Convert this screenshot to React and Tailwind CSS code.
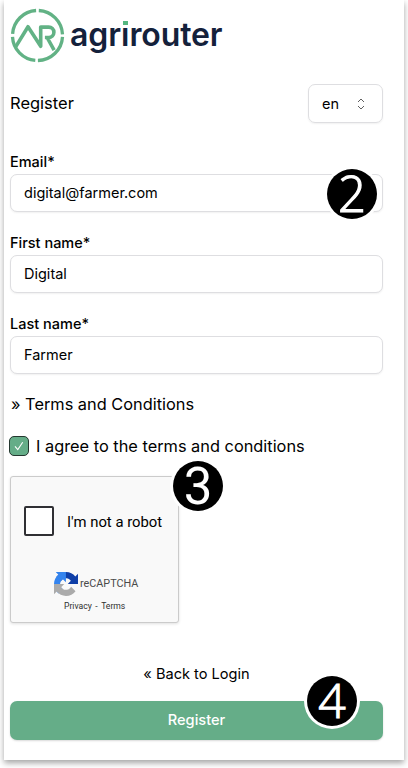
import React from 'react';

function Field({ label, value, children }) {
  return (
    <div className="relative mt-[19px] h-[62px]">
      <label className="block h-[24px] pt-[2px] text-[14.5px] leading-[20px] font-medium">{label}</label>
      <div className="flex h-[38px] items-center rounded-[7px] border border-[#dedee1] bg-white px-[13px] text-[14.5px] shadow-[0_1px_2px_rgba(0,0,0,0.06)]">
        {value}
      </div>
      {children}
    </div>
  );
}

function Badge({ n, place, type }) {
  return (
    <div className={`absolute z-10 flex h-[50px] w-[50px] items-center justify-center rounded-full bg-black leading-none text-white shadow-[0_0_0_3px_#fff] ${place} ${type}`}>
      {n}
    </div>
  );
}

function Logo() {
  return (
    <div className="flex h-[54px] items-center">
      <svg width="55" height="55" viewBox="-0.5 -0.5 55 55" fill="none" stroke="#62b285" strokeWidth="3.3">
        <path d="M28.3 2A25 25 0 0 1 52 25.8M52 28.4A25 25 0 0 1 27.4 52M24.8 51.9A25 25 0 0 1 2 28.3M2.1 25.4A25 25 0 0 1 25.6 2" />
        <path d="M5 38.6L17.5 18.2L30.2 37.8V18.6H38.2A5.2 5.2 0 0 1 38.2 29H34.4M36.6 29L43.6 41.6" strokeWidth="3.6" strokeLinejoin="round" />
      </svg>
      <div className="relative ml-[5px] w-[154px] text-[32px] leading-[40px] font-semibold tracking-[-0.1px] text-[#14213b]">
        agr&#305;router
        <span className="absolute top-[6px] left-[53px] h-[4px] w-[5px] bg-[#54b780]" />
      </div>
    </div>
  );
}

function Captcha() {
  return (
    <div className="relative mt-[20px] h-[147px] w-[169px] rounded-[3px] border border-[#cbcbcb] bg-[#f9f9f9] shadow-[0_1px_3px_rgba(0,0,0,0.12)] font-['Roboto',sans-serif]">
      <div className="flex items-center pt-[29px] pl-[13px]">
        <span className="h-[30px] w-[30px] rounded-[2px] border-2 border-[#303034] bg-white" />
        <span className="ml-[13px] pt-px text-[14.85px] leading-[20px] whitespace-nowrap text-black">I'm not a robot</span>
      </div>
      <div className="mt-[35px] ml-[43px] flex h-[25px] items-center">
        <svg width="24" height="24" viewBox="0 0 64 64">
          <path d="M64 31.955l-.033-1.37V4.687l-7.16 7.16C50.948 4.674 42.033.093 32.05.093c-10.4 0-19.622 4.96-25.458 12.64l11.736 11.86a15.55 15.55 0 0 1 4.754-5.334c2.05-1.6 4.952-2.906 8.968-2.906.485 0 .86.057 1.135.163 4.976.393 9.288 3.14 11.828 7.124l-8.307 8.307L64 31.953" fill="#0f3fa8" />
          <path d="M31.862.094l-1.37.033H4.594l7.16 7.16C4.58 13.147 0 22.06 0 32.046c0 10.4 4.96 19.622 12.64 25.458L24.5 45.768a15.55 15.55 0 0 1-5.334-4.754c-1.6-2.05-2.906-4.952-2.906-8.968 0-.485.057-.86.163-1.135.393-4.976 3.14-9.288 7.124-11.828l8.307 8.307L31.86.095" fill="#3484ee" />
          <path d="M.001 32.045l.033 1.37v25.898l7.16-7.16c5.86 7.173 14.774 11.754 24.76 11.754 10.4 0 19.622-4.96 25.458-12.64l-11.736-11.86a15.55 15.55 0 0 1-4.754 5.334c-2.05 1.6-4.952 2.906-8.968 2.906-.485 0-.86-.057-1.135-.163-4.976-.393-9.288-3.14-11.828-7.124l8.307-8.307L0 32.045" fill="#ababab" />
        </svg>
        <span className="ml-[2px] pt-[2px] text-[10.8px] text-[#4a4a4a]">reCAPTCHA</span>
      </div>
      <div className="mt-[3px] ml-[53px] flex gap-[3.5px] pt-px text-[8.6px] leading-[12px] text-[#303030]">
        <span>Privacy</span>
        <span>-</span>
        <span>Terms</span>
      </div>
      <Badge n="3" place="top-[-16px] left-[162px]" type="font-['Roboto',sans-serif] text-[51px] font-normal pt-px" />
    </div>
  );
}

export default function App() {
  return (
    <div className="h-[768px] w-[408px] overflow-hidden bg-white pl-[4px] font-['Inter',sans-serif] text-black">
      <main className="h-[760px] w-[400px] bg-white pt-[8px] pr-[21px] pl-[6px] shadow-[0_3px_6px_rgba(0,0,0,0.36)]">
        <Logo />
        <div className="mt-[22px] flex h-[39px] items-center justify-between">
          <h1 className="text-[16.5px]">Register</h1>
          <div className="flex h-[39px] w-[75px] items-center rounded-[7px] border border-[#dedee1] pl-[13px] text-[14.5px] shadow-[0_1px_2px_rgba(0,0,0,0.06)]">
            <span>en</span>
            <svg className="ml-[17px]" width="10" height="12" viewBox="0 0 10 12" fill="none" stroke="#606060" strokeWidth="1">
              <path d="M2 4L5 1L8 4M2 8L5 11L8 8" />
            </svg>
          </div>
        </div>
        <div className="h-[8px]" />
        <Field label="Email*" value="digital@farmer.com">
          <Badge n="2" place="top-[19px] left-[317px]" type="font-['Open_Sans',sans-serif] text-[49px] font-light pb-[2px] [-webkit-text-stroke:1.2px_white]" />
        </Field>
        <Field label="First name*" value="Digital" />
        <Field label="Last name*" value="Farmer" />
        <div className="mt-[19px] h-[23px] text-[16.35px] leading-[22px] pl-px">» Terms and Conditions</div>
        <div className="mt-[20px] flex h-[20px] items-center">
          <span className="ml-[-1px] flex h-[20px] w-[20px] items-center justify-center rounded-[5px] border-[1.5px] border-[#24372f] bg-[#65ad88]">
            <svg width="10" height="10" viewBox="0 0 10 10" fill="none" stroke="white" strokeWidth="1.1"><path d="M1 5.3L3.8 8.5L8.7 1.2" /></svg>
          </span>
          <span className="ml-[7px] text-[16.35px] whitespace-nowrap">I agree to the terms and conditions</span>
        </div>
        <Captcha />
        <div className="mt-[41px] h-[20px] text-center text-[14.6px] leading-[20px]">« Back to Login</div>
        <button className="relative mt-[17px] flex h-[39px] w-full items-center justify-center rounded-[7px] bg-[#65ad88] text-[14.6px] font-medium text-white shadow-[0_1px_2px_rgba(0,0,0,0.15)]">
          Register
          <Badge n="4" place="top-[-25px] left-[297px]" type="font-['Open_Sans',sans-serif] text-[48px] font-light pb-[2px] [-webkit-text-stroke:1.2px_white]" />
        </button>
      </main>
    </div>
  );
}
